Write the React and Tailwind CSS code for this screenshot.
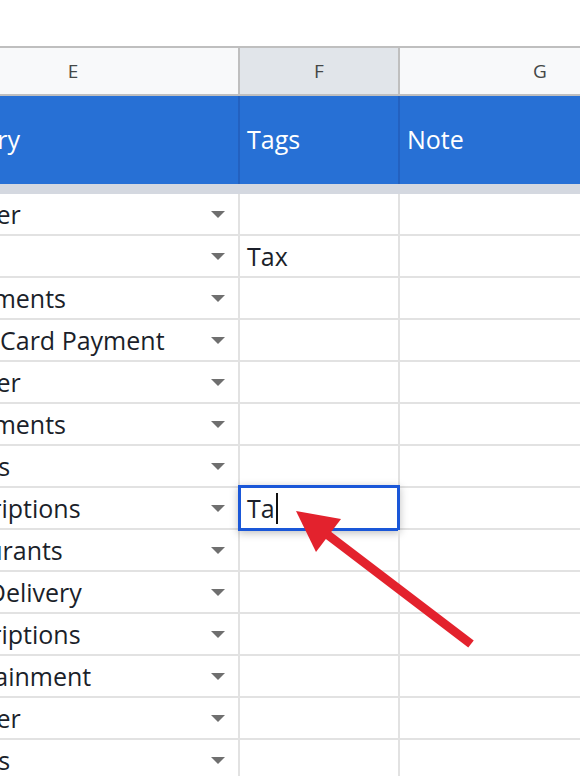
import React from 'react';

const rows = [
  { category: 'Transfer', tag: '' },
  { category: 'Taxes', tag: 'Tax' },
  { category: 'Investments', tag: '' },
  { category: 'Credit Card Payment', tag: '' },
  { category: 'Transfer', tag: '' },
  { category: 'Investments', tag: '' },
  { category: 'Utilities', tag: '' },
  { category: 'Subscriptions', tag: '', editing: 'Ta' },
  { category: 'Restaurants', tag: '' },
  { category: 'Food Delivery', tag: '' },
  { category: 'Subscriptions', tag: '' },
  { category: 'Entertainment', tag: '' },
  { category: 'Transfer', tag: '' },
  { category: 'Utilities', tag: '' },
];

function Caret() {
  return (
    <svg width="14" height="7" viewBox="0 0 14 7" className="shrink-0">
      <path d="M0 0h14L7 7z" fill="#6f6f6f" />
    </svg>
  );
}

function Arrow() {
  return (
    <svg
      className="absolute left-0 top-0 pointer-events-none"
      width="580"
      height="776"
      viewBox="0 0 580 776"
    >
      <line x1="324" y1="532" x2="471" y2="644" stroke="#e3222d" strokeWidth="9" />
      <polygon points="296,511 341,519 316,552" fill="#e3222d" />
    </svg>
  );
}

export default function App() {
  return (
    <div className="relative w-[580px] h-[776px] overflow-hidden bg-white font-['Open_Sans',sans-serif]">
      <div className="h-[46px]" />

      <div className="ml-[-84px]">
        {/* column letters */}
        <div className="flex h-[50px] border-y-2 border-[#bfbfbf] text-[19px] text-[#444746]">
          <div className="w-[324px] shrink-0 flex items-center justify-center pr-[8px] bg-[#f8f9fa] border-r-2 border-[#bfbfbf]">
            E
          </div>
          <div className="w-[160px] shrink-0 flex items-center justify-center bg-[#e1e5ea] border-r-2 border-[#bfbfbf]">
            F
          </div>
          <div className="w-[280px] shrink-0 flex items-center justify-center bg-[#f8f9fa]">
            G
          </div>
        </div>

        {/* blue title row */}
        <div className="flex h-[88px] bg-[#2770d5] text-white text-[25px] font-medium">
          <div className="w-[324px] shrink-0 flex items-center pl-0 border-r-2 border-[#2361c0]">
            Category
          </div>
          <div className="w-[160px] shrink-0 flex items-center pl-[7px] border-r-2 border-[#2361c0]">
            Tags
          </div>
          <div className="w-[280px] shrink-0 flex items-center pl-[7px]">Note</div>
        </div>

        <div className="h-[10px] bg-[#d4d8e0]" />

        {rows.map((row, i) => (
          <div
            key={i}
            className="flex h-[42px] border-b-2 border-[#e2e2e2] text-[25px] text-[#1b1f2a]"
          >
            <div className="w-[324px] shrink-0 flex items-center justify-between pl-[7px] pr-[13px] border-r-2 border-[#e2e2e2]">
              <span className="whitespace-nowrap leading-none">{row.category}</span>
              <Caret />
            </div>
            <div className="relative w-[160px] shrink-0 flex items-center pl-[7px] border-r-2 border-[#e2e2e2]">
              <span className="leading-none">{row.tag}</span>
              {row.editing && (
                <div className="absolute left-[-2px] top-[-3px] w-[162px] h-[46px] flex items-center pl-[6px] bg-white border-[3px] border-[#1a57d8] shadow-[0_2px_8px_rgba(0,0,0,0.25)]">
                  <span className="leading-none">{row.editing}</span>
                  <span className="ml-[1px] w-[2px] h-[31px] bg-[#111]" />
                </div>
              )}
            </div>
            <div className="w-[280px] shrink-0" />
          </div>
        ))}
      </div>

      <Arrow />
    </div>
  );
}
